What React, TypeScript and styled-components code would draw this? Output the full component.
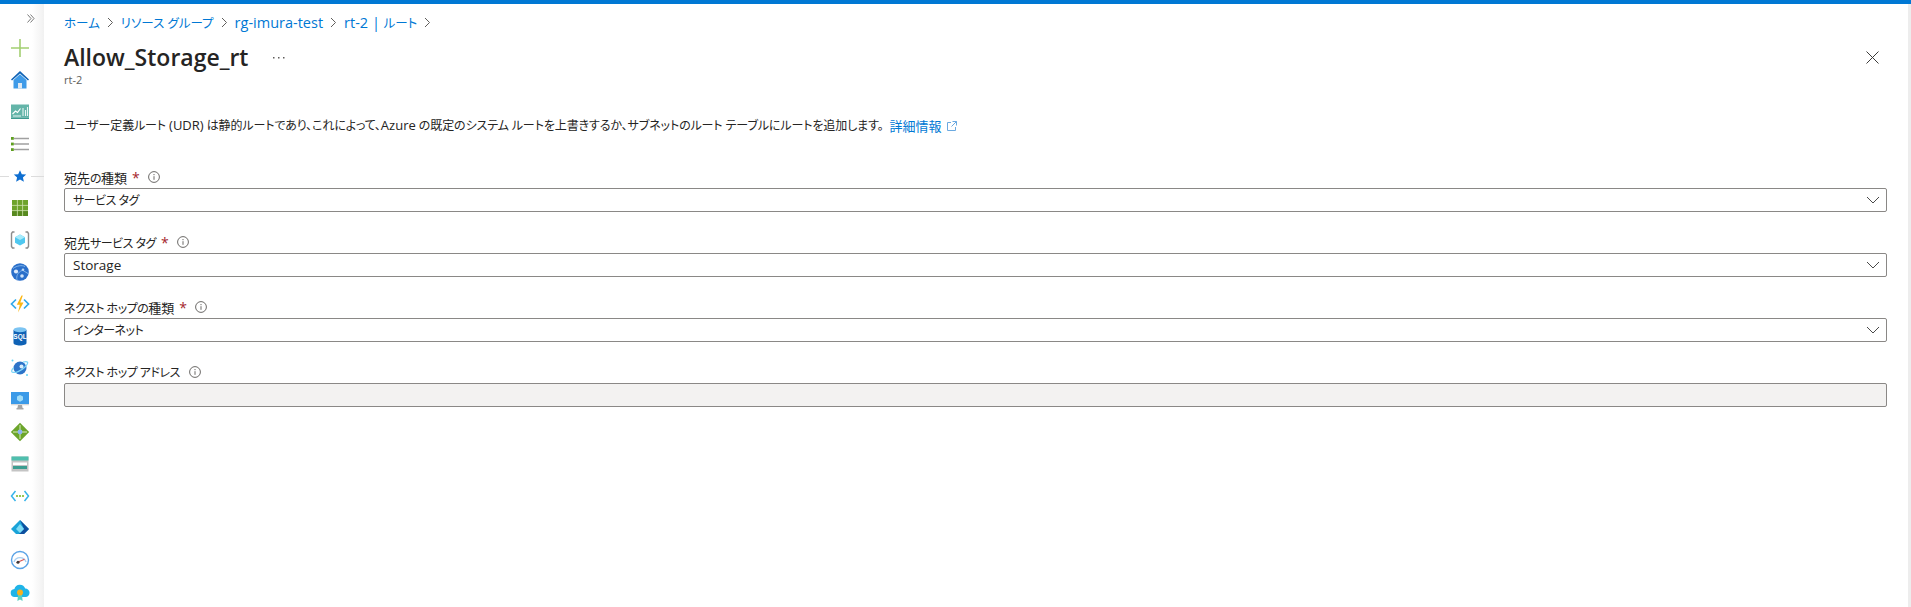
import React from "react";
import styled, { createGlobalStyle } from "styled-components";

const FONT = `"Open Sans", "Noto Sans CJK JP", sans-serif`;

const GlobalStyle = createGlobalStyle`
  html, body {
    margin: 0;
    height: 100%;
    background: #fff;
    overflow: hidden;
  }
  #root {
    height: 100%;
  }
`;

const Page = styled.div`
  display: flex;
  flex-direction: column;
  height: 607px;
  font-family: ${FONT};
  font-feature-settings: "palt";
  color: #323130;
`;

const TopBar = styled.div`
  height: 4px;
  flex: none;
  background: #0078d4;
`;

const Body = styled.div`
  flex: 1;
  display: flex;
  min-height: 0;
`;

const Sidebar = styled.nav`
  width: 44px;
  flex: none;
  display: flex;
  flex-direction: column;
  overflow: hidden;
  background: linear-gradient(90deg, #fff 0, #fff 32px, #f1f1f1 44px);
`;

const Expand = styled.div`
  height: 28px;
  flex: none;
  display: flex;
  align-items: center;
  justify-content: flex-end;
  padding-right: 9px;
  color: #7a7a7a;
`;

const NavItem = styled.div<{ $divided?: boolean }>`
  height: 32px;
  flex: none;
  display: flex;
  align-items: center;
  justify-content: center;
  padding-right: 4px;
  position: relative;

  ${(p) =>
    p.$divided &&
    `
    &::before, &::after {
      content: "";
      position: absolute;
      top: 16px;
      height: 1px;
      background: #dcdcdc;
    }
    &::before { left: 0; width: 9px; }
    &::after { left: 31px; right: 0; }
  `}
`;

const Main = styled.main`
  flex: 1;
  min-width: 0;
  display: flex;
  flex-direction: column;
  padding: 0 21px 0 20px;
`;

const Crumbs = styled.div`
  height: 36px;
  display: flex;
  align-items: center;
  font-size: 12.5px;
  padding-top: 1px;
  box-sizing: border-box;
`;

const Crumb = styled.a`
  color: #0078d4;
  text-decoration: none;
  white-space: nowrap;
`;

const CrumbLatin = styled.span`
  font-size: 14.5px;
`;

const CrumbSep = styled.span`
  display: flex;
  width: 21px;
  justify-content: center;
  color: #605e5c;
`;

const TitleRow = styled.div`
  display: flex;
  align-items: center;
  height: 34px;
`;

const Title = styled.h1`
  margin: 0;
  font-size: 23px;
  font-weight: 600;
  color: #252423;
  white-space: nowrap;
`;

const More = styled.span`
  margin-left: 25px;
  display: flex;
  color: #605e5c;
`;

const CloseButton = styled.span`
  margin-left: auto;
  margin-right: 8px;
  display: flex;
  color: #3b3a39;
`;

const Subtitle = styled.div`
  font-size: 11px;
  line-height: 16px;
  color: #605e5c;
  margin-top: -2px;
`;

const Description = styled.p`
  margin: 28px 0 0;
  font-size: 12px;
  letter-spacing: -0.1px;
  line-height: 18px;
  color: #252423;
  white-space: pre;
  display: flex;
  align-items: center;
`;

const Latin = styled.span`
  font-size: 13px;
  letter-spacing: 0;
`;

const DocLink = styled.a`
  color: #0078d4;
  font-size: 13px;
  letter-spacing: 0;
  text-decoration: none;
  margin-left: 6px;
  display: inline-flex;
  align-items: center;
  gap: 5px;
`;

const Form = styled.div`
  margin-top: 33px;
  display: flex;
  flex-direction: column;
  gap: 21px;
`;

const Field = styled.div`
  display: flex;
  flex-direction: column;
`;

const LabelRow = styled.div`
  height: 18px;
  margin-bottom: 2px;
  display: flex;
  align-items: center;
  font-size: 12px;
  letter-spacing: -0.5px;
  color: #252423;
  white-space: pre;
`;

const Kanji = styled.span`
  font-size: 13px;
  letter-spacing: 0;
`;

const Required = styled.span`
  color: #a4262c;
  margin-left: 5px;
  font-size: 14px;
`;

const InfoIcon = styled.span`
  display: flex;
  margin-left: 9px;
  color: #6b6967;
`;

const Select = styled.div<{ $disabled?: boolean; $latin?: boolean }>`
  box-sizing: border-box;
  height: 24px;
  display: flex;
  align-items: center;
  justify-content: space-between;
  padding: 0 6px 0 8px;
  font-size: ${(p) => (p.$latin ? "13.5px" : "12px")};
  letter-spacing: ${(p) => (p.$latin ? "0" : "-0.5px")};
  color: #252423;
  border: 1px solid #8a8886;
  border-radius: 2px;
  background: ${(p) => (p.$disabled ? "#f3f2f1" : "#fff")};
`;

const RightEdge = styled.div`
  width: 3px;
  flex: none;
  background: #ededed;
`;

const Chevron = () => (
  <svg width="7" height="11" viewBox="0 0 7 11" fill="none" stroke="currentColor">
    <path d="M1 1l4.5 4.5L1 10" />
  </svg>
);

const Info = () => (
  <svg width="12" height="12" viewBox="0 0 12 12" fill="none" stroke="currentColor">
    <circle cx="6" cy="6" r="5.4" />
    <path d="M6 5.2v3.6M6 3v1.2" />
  </svg>
);

const Down = () => (
  <svg width="14" height="8" viewBox="0 0 14 8" fill="none" stroke="#4a4a4a">
    <path d="M1 1l6 6 6-6" />
  </svg>
);

const Icon = ({ children }: { children: React.ReactNode }) => (
  <svg width="20" height="20" viewBox="0 0 20 20">
    {children}
  </svg>
);

const navIcons: { key: string; divided?: boolean; art: React.ReactNode }[] = [
  {
    key: "plus",
    art: <path d="M10 1v18M1 10h18" stroke="#a3cf72" strokeWidth="1.6" fill="none" />,
  },
  {
    key: "home",
    art: (
      <>
        <path d="M10 1L1 9.5l1 1L10 3.5l8 7 1-1z" fill="#0f62b5" />
        <path d="M3.5 10L10 4.2l6.5 5.8V18.5h-13z" fill="#3f9be8" />
        <rect x="8" y="13" width="4" height="5.5" fill="#dfe9f2" />
      </>
    ),
  },
  {
    key: "chart",
    art: (
      <>
        <rect x="1" y="2.5" width="18" height="13" fill="#64b5a9" />
        <rect x="1" y="15.5" width="18" height="1.5" fill="#3d9a8f" />
        <path d="M2.5 12l3-3 2 1.5 3-4" stroke="#fff" strokeWidth="1.2" fill="none" />
        <path d="M3 14h8M13 14V6M15.5 14V8M17.5 14V5" stroke="#e8f5f3" strokeWidth="1.1" fill="none" />
      </>
    ),
  },
  {
    key: "list",
    art: (
      <>
        <path d="M4 4.5h15M4 10h15M4 15.5h15" stroke="#a0a0a0" strokeWidth="1.5" fill="none" />
        <rect x="1" y="3" width="2.8" height="2.8" fill="#5e9e1f" />
        <rect x="1" y="8.6" width="2.8" height="2.8" fill="#5e9e1f" />
        <rect x="1" y="14.2" width="2.8" height="2.8" fill="#5e9e1f" />
      </>
    ),
  },
  {
    key: "star",
    divided: true,
    art: (
      <path
        d="M10 4.2l1.8 4 4.4.4-3.3 2.9 1 4.3L10 13.5l-3.9 2.3 1-4.3-3.3-2.9 4.4-.4z"
        fill="#0f6fd1"
      />
    ),
  },
  {
    key: "grid",
    art: (
      <>
        <rect x="2" y="2" width="16" height="16" fill="#6ea32b" />
        <rect x="2" y="12.5" width="16" height="5.5" fill="#57891f" />
        <path d="M7.4 2v16M12.6 2v16M2 7.4h16M2 12.6h16" stroke="#cfe3b0" strokeWidth=".8" fill="none" />
      </>
    ),
  },
  {
    key: "cube",
    art: (
      <>
        <path d="M4.5 2H2.5L1.5 3.5v13l1 1.5h2M15.5 2h2l1 1.5v13l-1 1.5h-2" stroke="#8c8c8c" strokeWidth="1.4" fill="none" />
        <path d="M10 4.5l5 2.700v5.600L10 15.500 5 12.800V7.200z" fill="#50c8f0" />
        <path d="M10 4.500l5 2.700L10 10 5 7.200z" fill="#a6ebfb" />
      </>
    ),
  },
  {
    key: "sphere",
    art: (
      <>
        <circle cx="10" cy="10" r="8.8" fill="#2a6fca" />
        <path d="M3 6.500c4-3 9-3.500 12-2M7 18c-1-4 1-8 5-9.500M13 8.500l5 3" stroke="#7fb4ea" strokeWidth="1" fill="none" />
        <circle cx="6" cy="9.500" r="2.100" fill="#dbeafb" />
        <circle cx="13" cy="7.800" r="1.300" fill="#bcd9f7" />
        <circle cx="12" cy="14" r="1.800" fill="#cfe3f9" />
      </>
    ),
  },
  {
    key: "function",
    art: (
      <>
        <path d="M6 5.500L1.500 10 6 14.500M14 5.500l4.500 4.500-4.500 4.500" stroke="#32a9ea" strokeWidth="1.700" fill="none" />
        <path d="M11.500 1.500L6.800 10.800h3L8 18.500l5.500-10h-3.200l2.500-7z" fill="#fcb714" />
      </>
    ),
  },
  {
    key: "sql",
    art: (
      <>
        <path d="M3.500 4v13c0 1.500 3 2.500 6.500 2.500s6.500-1 6.500-2.500V4z" fill="#0f62b5" />
        <ellipse cx="10" cy="3.800" rx="6.500" ry="2.500" fill="#7cc4f2" />
        <text x="10" y="13" fontSize="6.500" fontWeight="700" fill="#fff" textAnchor="middle" fontFamily="Liberation Sans">
          SQL
        </text>
      </>
    ),
  },
  {
    key: "cosmos",
    art: (
      <>
        <circle cx="10" cy="10" r="6.500" fill="#2d74c9" />
        <path d="M2 14c3 1.500 9-1 13-5 2-2 3-4 2.500-4.800-1-1-4.500 0-4.500 0M2 14c-.800-1 .5-3 1.700-4.200" stroke="#7fd6f7" strokeWidth="1.300" fill="none" />
        <circle cx="11.500" cy="8.500" r="2" fill="#d7ecfa" />
        <circle cx="2.500" cy="2.500" r="1" fill="#63d4f5" />
        <circle cx="17" cy="17" r="1" fill="#63d4f5" />
      </>
    ),
  },
  {
    key: "monitor",
    art: (
      <>
        <rect x="1" y="2" width="18" height="12.500" fill="#3b9ae8" />
        <rect x="1" y="14" width="18" height="1.300" fill="#d8d8d8" />
        <path d="M8 15h4l.6 3H7.400z" fill="#a5a5a5" />
        <path d="M6.500 18.200h7v1.200h-7z" fill="#909090" />
        <path d="M10 5l3 1.600v3.400L10 11.700 7 10V6.600z" fill="#9fdcf8" />
      </>
    ),
  },
  {
    key: "gateway",
    art: (
      <>
        <path d="M10 .800L19.200 10 10 19.200 .8 10z" fill="#6ca52b" />
        <path d="M10 3v14M3 10h14" stroke="#d8ecc0" strokeWidth="1" fill="none" />
        <circle cx="10" cy="10" r="2.400" fill="#8fb6f2" />
      </>
    ),
  },
  {
    key: "storage",
    art: (
      <>
        <rect x="1.500" y="2.500" width="17" height="15" fill="#c4c4c4" />
        <rect x="1.500" y="2.500" width="17" height="4" fill="#4fbfae" />
        <rect x="3" y="8.500" width="14" height="2.500" fill="#fff" />
        <rect x="3" y="12" width="14" height="3" fill="#3b9d90" />
      </>
    ),
  },
  {
    key: "vnet",
    art: (
      <>
        <path d="M5.500 5L1.500 10l4 5M14.500 5l4 5-4 5" stroke="#37b4ea" strokeWidth="1.500" fill="none" />
        <circle cx="7" cy="10" r="1.100" fill="#7fba2e" />
        <circle cx="10" cy="10" r="1.100" fill="#7fba2e" />
        <circle cx="13" cy="10" r="1.100" fill="#7fba2e" />
      </>
    ),
  },
  {
    key: "aad",
    art: (
      <>
        <path d="M10 2L1 11l5 5h8l5-5z" fill="#1aa3d8" />
        <path d="M10 2l9 9-5 5H9l5-5z" fill="#0f4f9e" />
        <path d="M10 6l4 5-4 4-4-4z" fill="#7fdcf5" />
      </>
    ),
  },
  {
    key: "gauge",
    art: (
      <>
        <circle cx="10" cy="10" r="8.500" fill="#fff" stroke="#5aa3e6" strokeWidth="1.400" />
        <path d="M4 12a6.300 6.300 0 0 1 12 0" stroke="#a9d0f2" strokeWidth="1.400" fill="none" />
        <path d="M6.500 12.800l8-3.500" stroke="#d9534f" strokeWidth="1.100" />
        <circle cx="8" cy="12.200" r="1.500" fill="#3a3a3a" />
      </>
    ),
  },
  {
    key: "cert",
    art: (
      <>
        <path d="M5 15a4 4 0 0 1-.6-8 5.600 5.600 0 0 1 10.800-.400A4.200 4.200 0 0 1 15.500 15z" fill="#1fb4e8" />
        <path d="M8 13l-.6 6 2.600-1.500 2.600 1.500L12 13z" fill="#55d0c4" />
        <circle cx="10" cy="10.500" r="3" fill="#f5b120" />
      </>
    ),
  },
];

const fields = [
  {
    key: "dest-type",
    label: (
      <>
        <Kanji>宛先</Kanji>の<Kanji>種類</Kanji>
      </>
    ),
    required: true,
    value: "サービス タグ",
    select: true,
  },
  {
    key: "dest-tag",
    label: (
      <>
        <Kanji>宛先</Kanji>サービス タグ
      </>
    ),
    required: true,
    value: "Storage",
    latin: true,
    select: true,
  },
  {
    key: "hop-type",
    label: (
      <>
        ネクスト ホップの<Kanji>種類</Kanji>
      </>
    ),
    required: true,
    value: "インターネット",
    select: true,
  },
  { key: "hop-addr", label: "ネクスト ホップ アドレス", required: false, value: "", select: false },
];

const crumbs: { key: string; text: React.ReactNode }[] = [
  { key: "home", text: "ホーム" },
  { key: "rg", text: "リソース グループ" },
  { key: "name", text: <CrumbLatin>rg-imura-test</CrumbLatin> },
  {
    key: "routes",
    text: (
      <>
        <CrumbLatin>rt-2 | </CrumbLatin>ルート
      </>
    ),
  },
];

export default function App() {
  return (
    <Page>
      <GlobalStyle />
      <TopBar />
      <Body>
        <Sidebar>
          <Expand>
            <svg width="8" height="9" viewBox="0 0 8 9" fill="none" stroke="currentColor">
              <path d="M.5.500l3.500 4-3.500 4M3.500.500l3.500 4-3.500 4" />
            </svg>
          </Expand>
          {navIcons.map((n) => (
            <NavItem key={n.key} $divided={n.divided}>
              <Icon>{n.art}</Icon>
            </NavItem>
          ))}
        </Sidebar>
        <Main>
          <Crumbs>
            {crumbs.map((c) => (
              <React.Fragment key={c.key}>
                <Crumb href="#">{c.text}</Crumb>
                <CrumbSep>
                  <Chevron />
                </CrumbSep>
              </React.Fragment>
            ))}
          </Crumbs>
          <TitleRow>
            <Title>Allow_Storage_rt</Title>
            <More>
              <svg width="12" height="3" viewBox="0 0 12 3" fill="currentColor">
                <rect x="0" y="1" width="1.500" height="1.500" />
                <rect x="5" y="1" width="1.500" height="1.500" />
                <rect x="10" y="1" width="1.500" height="1.500" />
              </svg>
            </More>
            <CloseButton>
              <svg width="13" height="13" viewBox="0 0 13 13" fill="none" stroke="currentColor">
                <path d="M.5.500l12 12M12.500.500l-12 12" />
              </svg>
            </CloseButton>
          </TitleRow>
          <Subtitle>rt-2</Subtitle>
          <Description>
            <span>
              ユーザー定義ルート <Latin>(UDR)</Latin> は静的ルートであり、これによって、<Latin>Azure</Latin> の既定のシステム ルートを上書きするか、サブネットのルート テーブルにルートを追加します。
            </span>
            <DocLink href="#">
              詳細情報
              <svg width="10" height="10" viewBox="0 0 10 10" fill="none" stroke="#6ba9e0">
                <path d="M4 1.500H.5v8h8V6M5.500.500h4v4M9.500.500L4.500 5.500" />
              </svg>
            </DocLink>
          </Description>
          <Form>
            {fields.map((f) => (
              <Field key={f.key}>
                <LabelRow>
                  <span>{f.label}</span>
                  {f.required && <Required>*</Required>}
                  <InfoIcon>
                    <Info />
                  </InfoIcon>
                </LabelRow>
                <Select $disabled={!f.select} $latin={f.latin}>
                  {f.value}
                  {f.select && <Down />}
                </Select>
              </Field>
            ))}
          </Form>
        </Main>
        <RightEdge />
      </Body>
    </Page>
  );
}
